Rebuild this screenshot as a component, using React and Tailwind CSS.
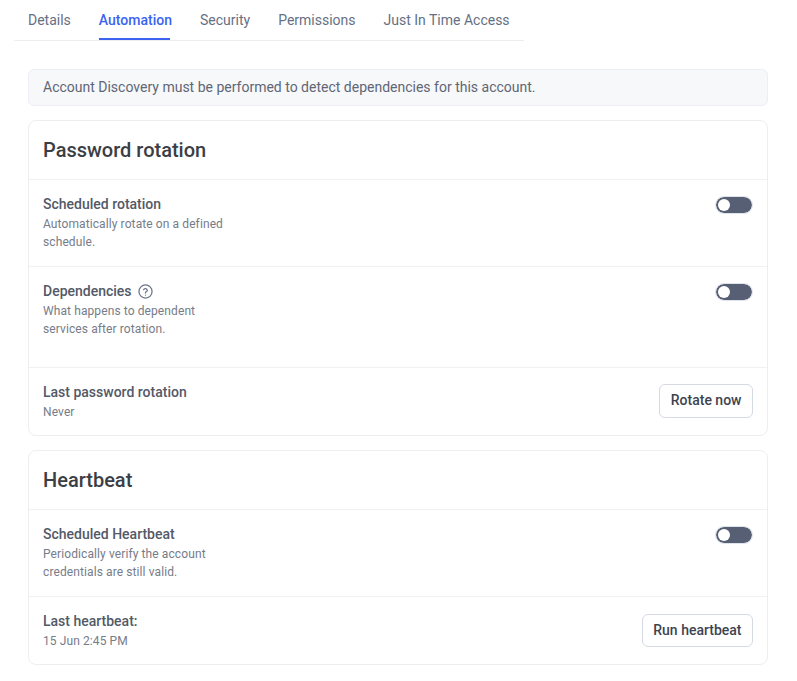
import { useState } from 'react';

const tabs = ['Details', 'Automation', 'Security', 'Permissions', 'Just In Time Access'];

function Toggle() {
  const [on, setOn] = useState(false);
  return (
    <div className="pt-[3px] pr-[1px]">
      <button
        type="button"
        onClick={() => setOn((prev) => !prev)}
        className={`flex h-[16px] w-[36px] items-center rounded-full bg-[#565f73] px-[2px] outline outline-1 outline-[#dfe3ea] ${on ? 'justify-end' : 'justify-start'}`}
      >
        <span className="block size-[12px] rounded-full bg-white" />
      </button>
    </div>
  );
}

function Row({ title, desc, help, className = '', children }) {
  return (
    <div className={`flex justify-between border-t border-[#f0f1f4] px-[14px] ${className}`}>
      <div>
        <div className="flex items-center gap-[6px]">
          <span className="text-[14px] leading-[20px] font-medium text-[#535967]">{title}</span>
          {help && (
            <svg width="15" height="15" viewBox="0 0 24 24" fill="none" stroke="#6b7488" strokeWidth="2" strokeLinecap="round" strokeLinejoin="round">
              <circle cx="12" cy="12" r="10.5" />
              <path d="M9 9.2a3 3 0 0 1 5.8 1c0 2-3 2.6-3 4" />
              <path d="M12 17.6h.01" />
            </svg>
          )}
        </div>
        <div className="mt-[1px] w-[185px] text-[12px] leading-[18px] tracking-[0.1px] text-[#767c89]">{desc}</div>
      </div>
      {children}
    </div>
  );
}

function OutlineButton({ className = '', children }) {
  return (
    <button type="button" className={`rounded-[6px] border border-[#d5d9e3] bg-white px-[10.5px] text-[14px] font-medium text-[#3d4350] ${className}`}>
      {children}
    </button>
  );
}

function Card({ title, children }) {
  return (
    <section className="mt-[14px] rounded-[8px] border border-[#eceef2] bg-white">
      <h2 className="flex h-[58px] items-center px-[14px] text-[20px] font-medium text-[#3b3e45]">{title}</h2>
      {children}
    </section>
  );
}

export default function App() {
  return (
    <div className="min-h-[681px] bg-white font-['Roboto',sans-serif]">
      <nav className="ml-[14px] flex h-[41px] w-[510px] gap-[28px] border-b border-[#eceef2] pl-[14px]">
        {tabs.map((tab) => (
          <a key={tab} className="relative h-[40px] pt-[11px] text-[14px] leading-[18px]">
            <span className={tab === 'Automation' ? 'font-medium text-[#3b63f0]' : 'text-[#667083]'}>{tab}</span>
            {tab === 'Automation' && <span className="absolute bottom-0 left-0 h-[2px] w-[71px] bg-[#3b63f0]" />}
          </a>
        ))}
      </nav>

      <main className="mr-[29px] ml-[28px] mt-[28px] pb-[16px]">
        <div className="flex h-[37px] items-center rounded-[6px] border border-[#eceef2] bg-[#f7f8fa] px-[14px] text-[14px] text-[#5f6675]">
          Account Discovery must be performed to detect dependencies for this account.
        </div>

        <Card title="Password rotation">
          <Row title="Scheduled rotation" desc="Automatically rotate on a defined schedule." className="h-[87px] pt-[14px] pb-[12px]">
            <Toggle />
          </Row>
          <Row title="Dependencies" help desc="What happens to dependent services after rotation." className="h-[101px] pt-[14px]">
            <Toggle />
          </Row>
          <Row title="Last password rotation" desc="Never" className="h-[68px] items-center">
            <div className="pb-[2px]"><OutlineButton className="h-[34px]">Rotate now</OutlineButton></div>
          </Row>
        </Card>

        <Card title="Heartbeat">
          <Row title="Scheduled Heartbeat" desc="Periodically verify the account credentials are still valid." className="h-[87px] pt-[14px]">
            <Toggle />
          </Row>
          <Row title="Last heartbeat:" desc="15 Jun 2:45 PM" className="h-[68px] items-center">
            <OutlineButton className="h-[33px]">Run heartbeat</OutlineButton>
          </Row>
        </Card>
      </main>
    </div>
  );
}
